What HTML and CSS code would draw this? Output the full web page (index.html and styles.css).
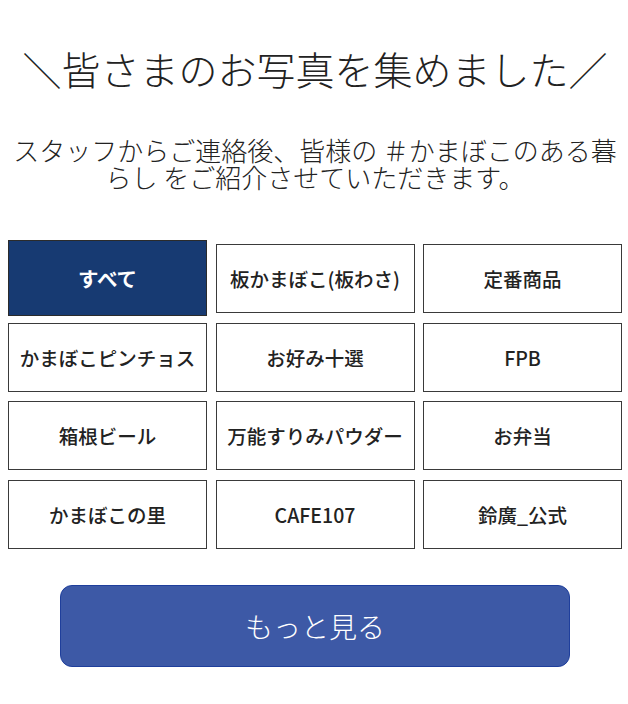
FILE: index.html
```html
<!DOCTYPE html>
<html lang="ja">
<head>
    <meta charset="UTF-8">
    <title>皆さまのお写真</title>
    <link rel="stylesheet" href="styles.css">
</head>
<body>
<div class="gallery-section">
    <h2 class="gallery-title">＼皆さまのお写真を集めました／</h2>
    <p class="gallery-lead">スタッフからご連絡後、皆様の ＃かまぼこのある暮らし をご紹介させていただきます。</p>

    <div class="tag-grid">
        <button class="tag-button selected">すべて</button>
        <button class="tag-button">板かまぼこ(板わさ)</button>
        <button class="tag-button">定番商品</button>
        <button class="tag-button">かまぼこピンチョス</button>
        <button class="tag-button">お好み十選</button>
        <button class="tag-button">FPB</button>
        <button class="tag-button">箱根ビール</button>
        <button class="tag-button">万能すりみパウダー</button>
        <button class="tag-button">お弁当</button>
        <button class="tag-button">かまぼこの里</button>
        <button class="tag-button">CAFE107</button>
        <button class="tag-button">鈴廣_公式</button>
    </div>

    <div class="more-wrap">
        <button class="more-button">もっと見る</button>
    </div>
</div>
</body>
</html>
```

FILE: styles.css
```css
body {
    margin: 0;
    background-color: #fff;
    color: #222;
    font-family: "Noto Sans CJK JP", "Noto Sans", sans-serif;
}

.gallery-section {
    padding: 45px 6px 0 8px;
}

.gallery-title {
    margin: 0;
    font-size: 39px;
    font-weight: 300;
    line-height: 46px;
    text-align: center;
}

.gallery-lead {
    margin: 44.5px 0 0;
    font-size: 26px;
    font-weight: 300;
    line-height: 27px;
    text-align: center;
}

.tag-grid {
    display: grid;
    grid-template-columns: repeat(3, 1fr);
    grid-auto-rows: 69px;
    column-gap: 8.5px;
    row-gap: 9.5px;
    margin-top: 54.5px;
}

.tag-button {
    margin: 0;
    padding: 0 4px;
    background-color: #fff;
    border: 1.5px solid #3a3a3a;
    color: #222;
    font-family: "Noto Sans CJK JP", "Noto Sans", sans-serif;
    font-size: 19.5px;
    font-weight: 500;
    white-space: nowrap;
    cursor: pointer;
}

.tag-button.selected {
    margin: -4px 0 -3px;
    background-color: #173a72;
    border-color: #2b2b2b;
    color: #fff;
    font-size: 20.5px;
    font-weight: 700;
}

.more-wrap {
    display: flex;
    justify-content: center;
    margin-top: 36px;
}

.more-button {
    width: 510px;
    height: 82px;
    background-color: #3d59a6;
    border: 1px solid #1f3f9c;
    border-radius: 12px;
    color: #fff;
    font-family: "Noto Sans CJK JP", "Noto Sans", sans-serif;
    font-size: 28px;
    font-weight: 300;
    cursor: pointer;
}
```
